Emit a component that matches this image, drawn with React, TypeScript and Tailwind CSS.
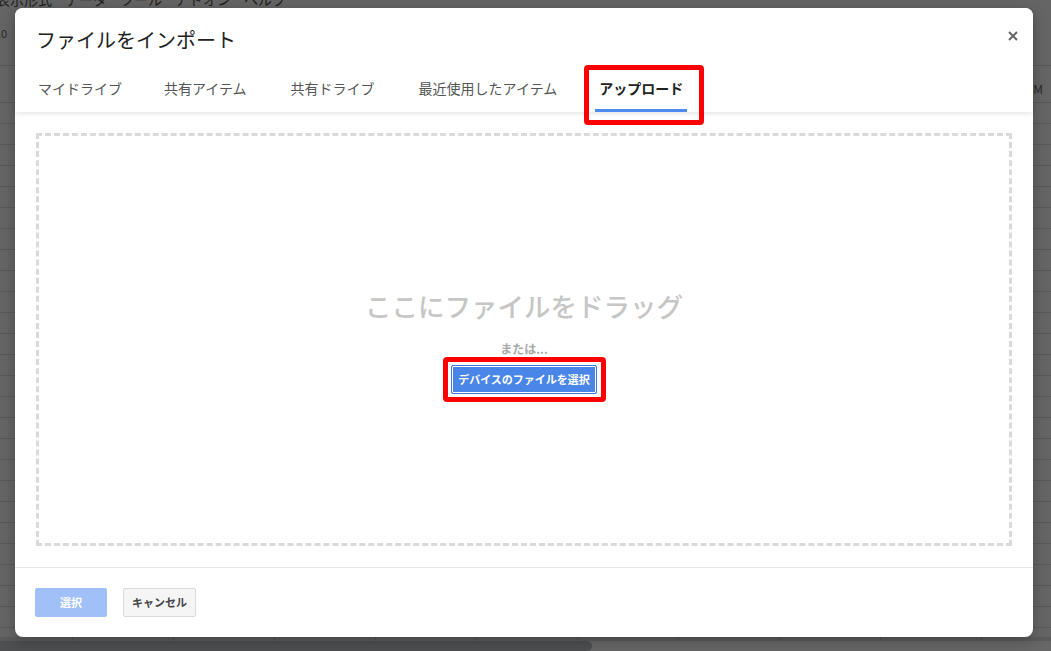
import React from "react";

const tabs = [
  { t: "マイドライブ", c: "" },
  { t: "共有アイテム", c: "" },
  { t: "共有ドライブ", c: "ml-[2px]" },
  { t: "最近使用したアイテム", c: "ml-[2px]" },
];

export default function App() {
  const rows = Array.from({ length: 26 });
  const cols = Array.from({ length: 10 });
  return (
    <div className="relative w-[1051px] h-[651px] overflow-hidden bg-[#656565] font-['Noto_Sans_CJK_JP','Noto_Sans',sans-serif]">
      {/* dimmed spreadsheet behind the modal */}
      <div className="flex h-full flex-col">
        <div className="h-[8px] overflow-hidden">
          <div className="-ml-[4px] -mt-[10px] flex gap-[13px] text-[14px] leading-[18px] text-[#1e1e1e]">
            <span>表示形式</span>
            <span>データ</span>
            <span>ツール</span>
            <span>アドオン</span>
            <span>ヘルプ</span>
          </div>
        </div>
        <div className="flex h-[58px] items-center border-b border-[#585858] pl-[1px] text-[11px] text-[#2a2a2a]">
          <span className="-ml-[3px] mt-[-6px]">.0</span>
        </div>
        <div className="flex h-[37px] items-end justify-end border-b border-[#585858] pb-[4px] pr-[8px] text-[12px] text-[#2a2a2a]">
          <span>M</span>
        </div>
        <div className="flex-1 overflow-hidden">
          {rows.map((_, i) => (
            <div key={i} className="h-[21px] border-b border-[#585858]" />
          ))}
        </div>
        <div className="flex h-[4px] bg-[#5b5b5b]">
          <div className="w-[73px] shrink-0 border-r border-[#4f4f4f]" />
          {cols.map((_, i) => (
            <div key={i} className="w-[101px] shrink-0 border-r border-[#4f4f4f]" />
          ))}
        </div>
        <div className="flex h-[10px] bg-[#676767]">
          <div className="w-[592px] rounded-r-[5px] bg-[#4e4f50]" />
        </div>
      </div>

      {/* modal */}
      <div className="absolute left-[15px] top-[8px] flex h-[629px] w-[1018px] flex-col rounded-[8px] bg-white shadow-[0_4px_16px_rgba(0,0,0,0.25)]">
        <div className="relative z-10 h-[104px] rounded-t-[8px] bg-white shadow-[0_2px_4px_rgba(0,0,0,0.09)]">
          <div className="pl-[21px] pt-[20px] text-[20px] leading-[24px] text-[#222]">ファイルをインポート</div>
          <button className="absolute right-[15px] top-[23px] flex h-[10px] w-[10px] items-center justify-center">
            <svg width="10" height="10" viewBox="0 0 10 10">
              <path d="M1 1L9 9M9 1L1 9" stroke="#666" strokeWidth="2" />
            </svg>
          </button>
          <div className="mt-[12px] flex h-[48px] pl-[2px]">
            {tabs.map(({ t, c }) => (
              <div key={t} className={`flex items-center px-[21px] text-[14px] text-[#555] ${c}`}>
                {t}
              </div>
            ))}
            <div className="relative flex items-center px-[21px] text-[14px] font-bold text-[#222]">
              アップロード
              <span className="absolute bottom-[0px] left-[17px] right-[17px] h-[3px] bg-[#4d8cf0]" />
              <span className="absolute -bottom-[13px] left-[6px] right-[0px] top-[1px] rounded-[4px] border-[5px] border-[#ff0000]" />
            </div>
          </div>
        </div>

        <div className="flex flex-1 p-[21px]">
          <div className="flex flex-1 flex-col items-center justify-center border-[3px] border-dashed border-[#dadada] pt-[5px]">
            <div className="text-[26.5px] font-medium leading-[32px] text-[#c6c6c6]">ここにファイルをドラッグ</div>
            <div className="mt-[19px] text-[12px] font-bold leading-[16px] text-[#a8a8a8]">または...</div>
            <div className="relative mt-[8px]">
              <button className="h-[29px] rounded-[2px] border border-[#3b78e7] bg-[#4a86e8] px-[6px] text-[11px] font-bold text-white shadow-[inset_0_0_0_1px_#ffffff]">
                デバイスのファイルを選択
              </button>
              <span className="absolute -bottom-[8px] -left-[8px] -right-[9px] -top-[8px] rounded-[4px] border-[5px] border-[#ff0000]" />
            </div>
          </div>
        </div>

        <div className="flex h-[70px] gap-[16px] border-t border-[#e5e5e5] pl-[20px] pt-[20px]">
          <button className="h-[29px] w-[72px] rounded-[2px] bg-[#a1c0f8] text-[11px] font-bold text-white">選択</button>
          <button className="h-[29px] w-[73px] rounded-[2px] border border-[#d9d9d9] bg-[#f5f5f5] text-[11px] font-bold text-[#444]">キャンセル</button>
        </div>
      </div>
    </div>
  );
}
